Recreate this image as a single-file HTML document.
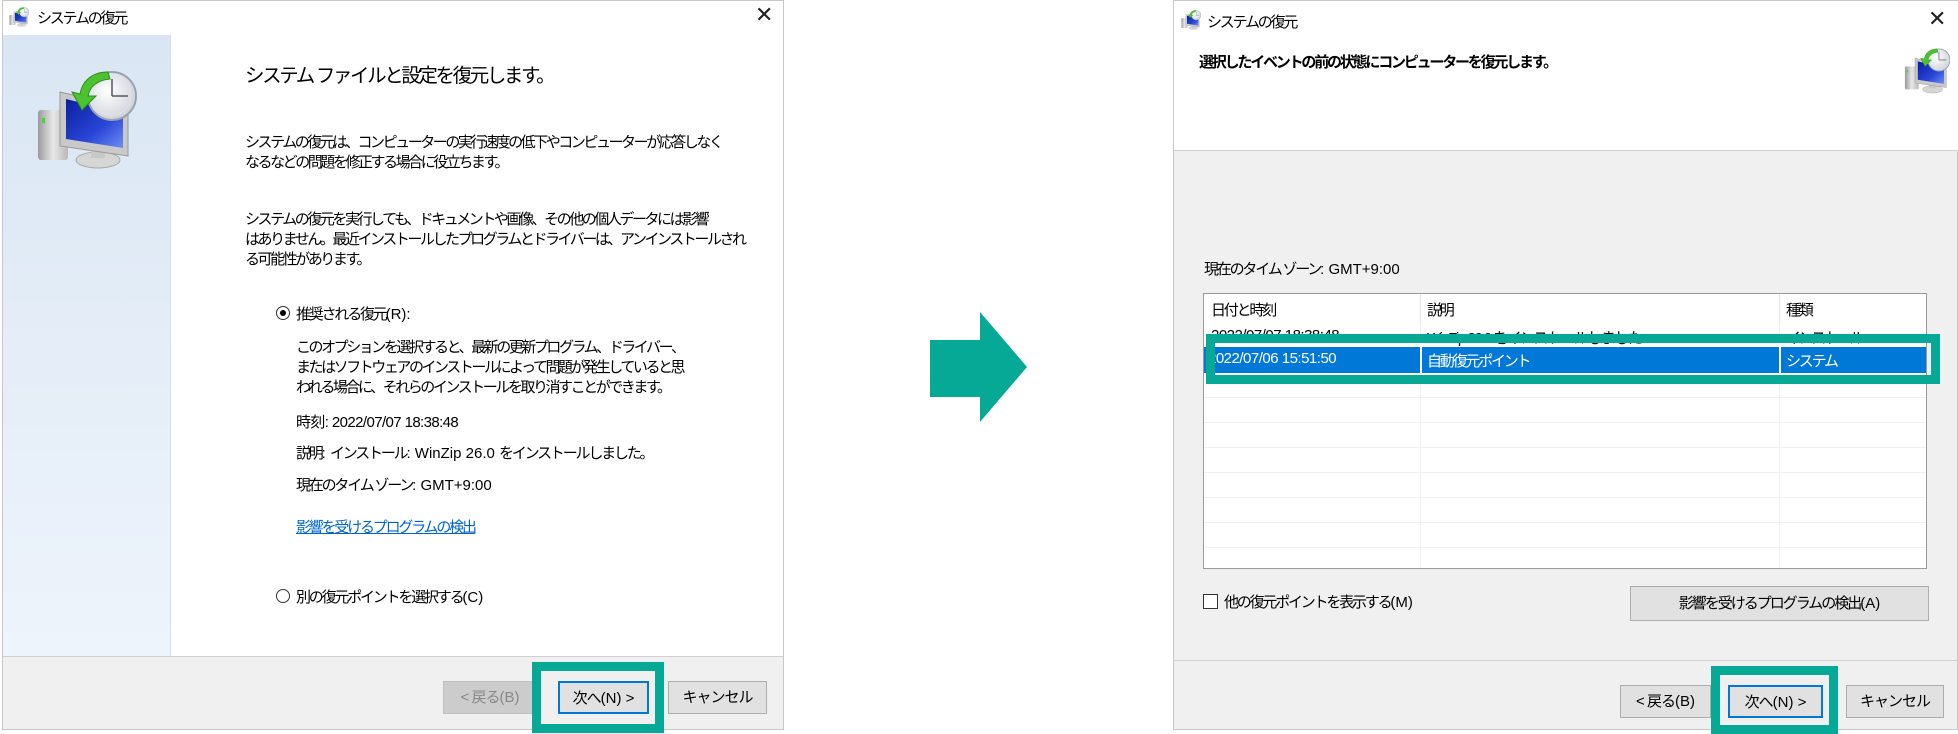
<!DOCTYPE html>
<html><head><meta charset="utf-8"><style>
*{margin:0;padding:0;box-sizing:border-box}
body{width:1958px;height:734px;background:#fff;position:relative;overflow:hidden;font-family:"Liberation Sans","Noto Sans CJK JP",sans-serif;color:#000;font-size:15px}
.a{position:absolute;white-space:nowrap}
.j{letter-spacing:-2.2px}
.n{letter-spacing:0}
.btn{position:absolute;background:#e1e1e1;border:1px solid #adadad;text-align:center;font-size:15px;letter-spacing:-1px}
.teal{position:absolute;border:9px solid #05a996}
</style></head><body>
<svg width="0" height="0" style="position:absolute">
<defs>
<linearGradient id="scr" x1="0" y1="0" x2="1" y2="1"><stop offset="0" stop-color="#0a1e9e"/><stop offset="0.6" stop-color="#2a46d8"/><stop offset="1" stop-color="#6e8ef0"/></linearGradient>
<linearGradient id="gry" x1="0" y1="0" x2="1" y2="0"><stop offset="0" stop-color="#9a9a9a"/><stop offset="0.5" stop-color="#e8e8e8"/><stop offset="1" stop-color="#b8b8b8"/></linearGradient>
<radialGradient id="clk" cx="0.4" cy="0.4" r="0.7"><stop offset="0" stop-color="#fff"/><stop offset="1" stop-color="#c9ced6"/></radialGradient>
<symbol id="ico" viewBox="0 0 100 100">
<rect x="2" y="40" width="30" height="50" rx="3" fill="url(#gry)"/>
<rect x="6" y="48" width="3" height="5" fill="#4bcf3a"/>
<ellipse cx="62" cy="90" rx="22" ry="8" fill="#d6d6d6" stroke="#aaa"/>
<rect x="55" y="76" width="14" height="12" fill="#c8c8c8"/>
<polygon points="24,22 92,38 92,86 24,76" fill="#c9c9c9" stroke="#999"/>
<polygon points="30,29 87,43 87,78 30,69" fill="url(#scr)"/>
<circle cx="76" cy="26" r="24" fill="url(#clk)" stroke="#9aa2ad" stroke-width="2"/>
<circle cx="76" cy="26" r="19" fill="none" stroke="#dfe3e8"/>
<line x1="76" y1="26" x2="76" y2="9" stroke="#556" stroke-width="1.5"/>
<line x1="76" y1="26" x2="92" y2="26" stroke="#556" stroke-width="1.5"/>
<path d="M72 2 C55 2 46 12 44 24 L36 22 L46 40 L60 26 L52 26 C54 16 62 10 74 9 Z" fill="#4cc230" stroke="#2f8f1c" stroke-width="1"/>
</symbol>
</defs></svg>

<!-- LEFT DIALOG -->
<div class="a" style="left:2px;top:0;width:782px;height:730px;border:1px solid #c8c8c8;background:#fff"></div>
<svg class="a" style="left:9px;top:7px" width="20" height="20"><use href="#ico"/></svg>
<div class="a j" style="left:37px;top:7px;font-size:15px">システムの復元</div>
<div class="a" style="left:755px;top:2px;font-size:22px;font-weight:300;color:#222">✕</div>
<div class="a" style="left:3px;top:35px;width:168px;height:621px;background:linear-gradient(#dae6f4,#eef4fb);border-right:1px solid #d5e1ef"></div>
<svg class="a" style="left:35px;top:70px" width="102" height="100"><use href="#ico"/></svg>
<div class="a j" style="left:245px;top:59px;font-size:19.5px;letter-spacing:-2.4px">システム ファイルと設定を復元します。</div>
<div class="a j" style="left:245px;top:133px;line-height:20px;letter-spacing:-2.45px">システムの復元は、コンピューターの実行速度の低下やコンピューターが応答しなく<br>なるなどの問題を修正する場合に役立ちます。</div>
<div class="a j" style="left:245px;top:210px;line-height:20px;letter-spacing:-2.45px">システムの復元を実行しても、ドキュメントや画像、その他の個人データには影響<br>はありません。最近インストールしたプログラムとドライバーは、アンインストールされ<br>る可能性があります。</div>
<div class="a" style="left:276px;top:306px;width:14px;height:14px;border:1px solid #333;border-radius:50%"><div style="position:absolute;left:3px;top:3px;width:6px;height:6px;background:#000;border-radius:50%"></div></div>
<div class="a j" style="left:296px;top:303px">推奨される復元<span class="n">(R):</span></div>
<div class="a j" style="left:296px;top:338px;line-height:20px;letter-spacing:-2.45px">このオプションを選択すると、最新の更新プログラム、ドライバー、<br>またはソフトウェアのインストールによって問題が発生していると思<br>われる場合に、それらのインストールを取り消すことができます。</div>
<div class="a" style="left:296px;top:411px;letter-spacing:-0.6px">時刻: 2022/07/07 18:38:48</div>
<div class="a j" style="left:296px;top:442px">説明<span class="n">: </span>インストール<span class="n">: WinZip 26.0 </span>をインストールしました。</div>
<div class="a j" style="left:296px;top:474px">現在のタイム ゾーン<span class="n">: GMT+9:00</span></div>
<div class="a j" style="left:296px;top:516px;color:#0066cc;text-decoration:underline">影響を受けるプログラムの検出</div>
<div class="a" style="left:276px;top:589px;width:14px;height:14px;border:1px solid #333;border-radius:50%"></div>
<div class="a j" style="left:296px;top:586px">別の復元ポイントを選択する<span class="n">(C)</span></div>
<div class="a" style="left:3px;top:656px;width:780px;height:73px;background:#f0f0f0;border-top:1px solid #d0d0d0"></div>
<div class="btn" style="left:443px;top:681px;width:94px;height:33px;line-height:31px;color:#888;background:#cccccc;border-color:#bfbfbf">&lt; 戻る<span class="n">(B)</span></div>
<div class="btn" style="left:558px;top:681px;width:91px;height:33px;line-height:31px;border:2px solid #0078d7">次へ<span class="n">(N) &gt;</span></div>
<div class="btn" style="left:668px;top:681px;width:99px;height:33px;line-height:31px">キャンセル</div>
<div class="teal" style="left:532px;top:662px;width:132px;height:71px"></div>

<!-- ARROW -->
<svg class="a" style="left:925px;top:308px" width="110" height="120"><polygon points="5,32 55,32 55,4 102,59 55,114 55,89 5,89" fill="#05a996"/></svg>

<!-- RIGHT DIALOG -->
<div class="a" style="left:1173px;top:0;width:785px;height:730px;border:1px solid #c8c8c8;background:#f0f0f0"></div>
<div class="a" style="left:1174px;top:1px;width:784px;height:150px;background:#fff;border-bottom:1px solid #d0d0d0"></div>
<svg class="a" style="left:1181px;top:10px" width="20" height="20"><use href="#ico"/></svg>
<div class="a j" style="left:1207px;top:11px">システムの復元</div>
<div class="a" style="left:1928px;top:6px;font-size:22px;font-weight:300;color:#222">✕</div>
<div class="a j" style="left:1199px;top:51px;font-weight:bold;letter-spacing:-2.2px">選択したイベントの前の状態にコンピューターを復元します。</div>
<svg class="a" style="left:1904px;top:48px" width="46" height="46"><use href="#ico"/></svg>
<div class="a j" style="left:1204px;top:258px">現在のタイム ゾーン<span class="n">: GMT+9:00</span></div>
<div class="a" style="left:1203px;top:293px;width:724px;height:276px;background:#fff;border:1px solid #9a9a9a;overflow:hidden">
 <div style="position:absolute;left:216px;top:0;width:1px;height:276px;background:#f0f0f0"></div>
 <div style="position:absolute;left:575px;top:0;width:1px;height:276px;background:#f0f0f0"></div>
 <div style="position:absolute;left:216px;top:0;width:1px;height:29px;background:#e5e5e5"></div>
 <div style="position:absolute;left:575px;top:0;width:1px;height:29px;background:#e5e5e5"></div>
 <div class="a j" style="left:7px;top:5px">日付と時刻</div>
 <div class="a" style="left:100px;top:-4px;font-size:10px;color:#888">ˇ</div>
 <div class="a j" style="left:223px;top:5px">説明</div>
 <div class="a j" style="left:582px;top:5px">種類</div>
 <div class="a" style="left:7px;top:33px;letter-spacing:-0.5px">2022/07/07 18:38:48</div>
 <div class="a" style="left:223px;top:33px;letter-spacing:-1.5px">WinZip 26.0 をインストールしました</div>
 <div class="a j" style="left:582px;top:33px">インストール</div>
 <div style="position:absolute;left:0;top:53px;width:722px;height:26px;background:#0078d7"></div>
 <div style="position:absolute;left:216px;top:53px;width:2px;height:26px;background:#fff"></div>
 <div style="position:absolute;left:575px;top:53px;width:2px;height:26px;background:#fff"></div>
 <div class="a" style="left:4px;top:56px;color:#fff;letter-spacing:-0.5px">2022/07/06 15:51:50</div>
 <div class="a j" style="left:223px;top:56px;color:#fff">自動復元ポイント</div>
 <div class="a j" style="left:582px;top:56px;color:#fff">システム</div>
 <div style="position:absolute;left:0;top:103px;width:722px;height:1px;background:#f0f0f0"></div>
 <div style="position:absolute;left:0;top:128px;width:722px;height:1px;background:#f0f0f0"></div>
 <div style="position:absolute;left:0;top:153px;width:722px;height:1px;background:#f0f0f0"></div>
 <div style="position:absolute;left:0;top:178px;width:722px;height:1px;background:#f0f0f0"></div>
 <div style="position:absolute;left:0;top:203px;width:722px;height:1px;background:#f0f0f0"></div>
 <div style="position:absolute;left:0;top:228px;width:722px;height:1px;background:#f0f0f0"></div>
 <div style="position:absolute;left:0;top:253px;width:722px;height:1px;background:#f0f0f0"></div>
</div>
<div class="teal" style="left:1206px;top:334px;width:734px;height:50px"></div>
<div class="a" style="left:1203px;top:594px;width:15px;height:15px;border:1px solid #333;background:#fff"></div>
<div class="a j" style="left:1224px;top:591px">他の復元ポイントを表示する<span class="n">(M)</span></div>
<div class="btn" style="left:1630px;top:586px;width:299px;height:35px;line-height:33px;letter-spacing:-2px">影響を受けるプログラムの検出<span class="n">(A)</span></div>
<div class="a" style="left:1174px;top:660px;width:784px;height:1px;background:#d0d0d0"></div>
<div class="btn" style="left:1620px;top:685px;width:91px;height:33px;line-height:31px">&lt; 戻る<span class="n">(B)</span></div>
<div class="btn" style="left:1728px;top:685px;width:95px;height:33px;line-height:31px;border:2px solid #0078d7">次へ<span class="n">(N) &gt;</span></div>
<div class="btn" style="left:1846px;top:685px;width:98px;height:33px;line-height:31px">キャンセル</div>
<div class="teal" style="left:1711px;top:666px;width:127px;height:68px"></div>
</body></html>
